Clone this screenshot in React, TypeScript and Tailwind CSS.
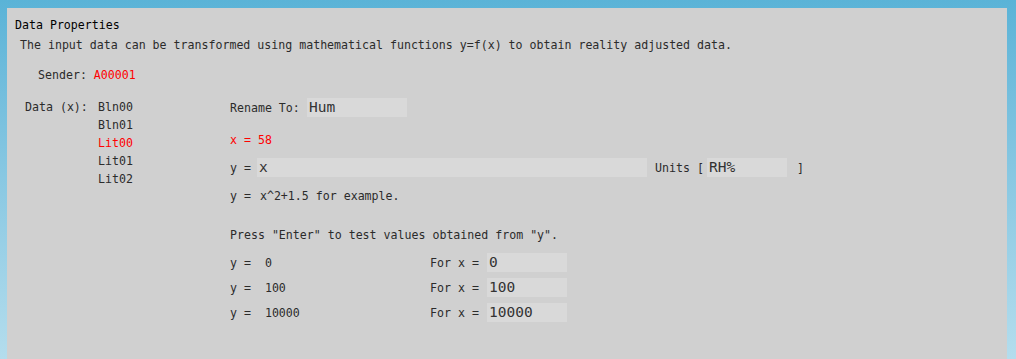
const mono = "font-['DejaVu_Sans_Mono','Liberation_Mono',monospace]";

const dataItems = [
  { name: 'Bln00', active: false },
  { name: 'Bln01', active: false },
  { name: 'Lit00', active: true },
  { name: 'Lit01', active: false },
  { name: 'Lit02', active: false },
];

const samples = ['0', '100', '10000'];

function Field({ value, width }: { value: string; width: string }) {
  return (
    <input
      readOnly
      value={value}
      className={`${width} h-[19px] bg-[#d9d9d9] px-[2px] text-[14.5px] leading-[19px] text-[#333] outline-none ${mono}`}
    />
  );
}

export default function App() {
  return (
    <div className="h-[359px] overflow-hidden bg-gradient-to-b from-[#5ab3d7] to-[#b4dded] pl-[7px] pt-[8px]">
      <div className={`h-[351px] w-[1000px] bg-[#d0d0d0] pl-[8px] pt-[8px] text-[11.6px] leading-[18px] text-[#2b2b2b] ${mono}`}>
        <div className="text-black">Data Properties</div>
        <div className="mt-[2px] pl-[5px]">
          The input data can be transformed using mathematical functions y=f(x) to obtain reality adjusted data.
        </div>

        <div className="mt-[12px] pl-[23px]">
          Sender: <span className="text-[#ff0000]">A00001</span>
        </div>

        <div className="mt-[14px] flex">
          <div className="flex w-[215px] pl-[10px]">
            <div className="w-[73px]">Data (x):</div>
            <div className="flex flex-col">
              {dataItems.map((item) => (
                <div key={item.name} className={item.active ? 'text-[#ff0000]' : ''}>
                  {item.name}
                </div>
              ))}
            </div>
          </div>

          <div className="flex flex-col">
            <div className="flex h-[19px] items-center">
              <span className="w-[77px]">Rename To:</span>
              <Field value="Hum" width="w-[100px]" />
            </div>

            <div className="mt-[14px] text-[#ff0000]">x = 58</div>

            <div className="mt-[9px] flex h-[19px] items-center">
              <span className="w-[27px]">y =</span>
              <Field value="x" width="w-[390px]" />
              <span className="ml-[8px] w-[52px]">Units [</span>
              <Field value="RH%" width="w-[80px]" />
              <span className="ml-[10px]">]</span>
            </div>

            <div className="mt-[10px]">
              y = <span className="ml-[2px]">x^2+1.5 for example.</span>
            </div>

            <div className="mt-[21px]">Press "Enter" to test values obtained from "y".</div>

            <div className="mt-[9px] flex flex-col gap-[6px]">
              {samples.map((v) => (
                <div key={v} className="flex h-[19px] items-center">
                  <span className="w-[200px] whitespace-pre">{`y =  ${v}`}</span>
                  <span className="w-[57px]">For x =</span>
                  <Field value={v} width="w-[80px]" />
                </div>
              ))}
            </div>
          </div>
        </div>
      </div>
    </div>
  );
}
